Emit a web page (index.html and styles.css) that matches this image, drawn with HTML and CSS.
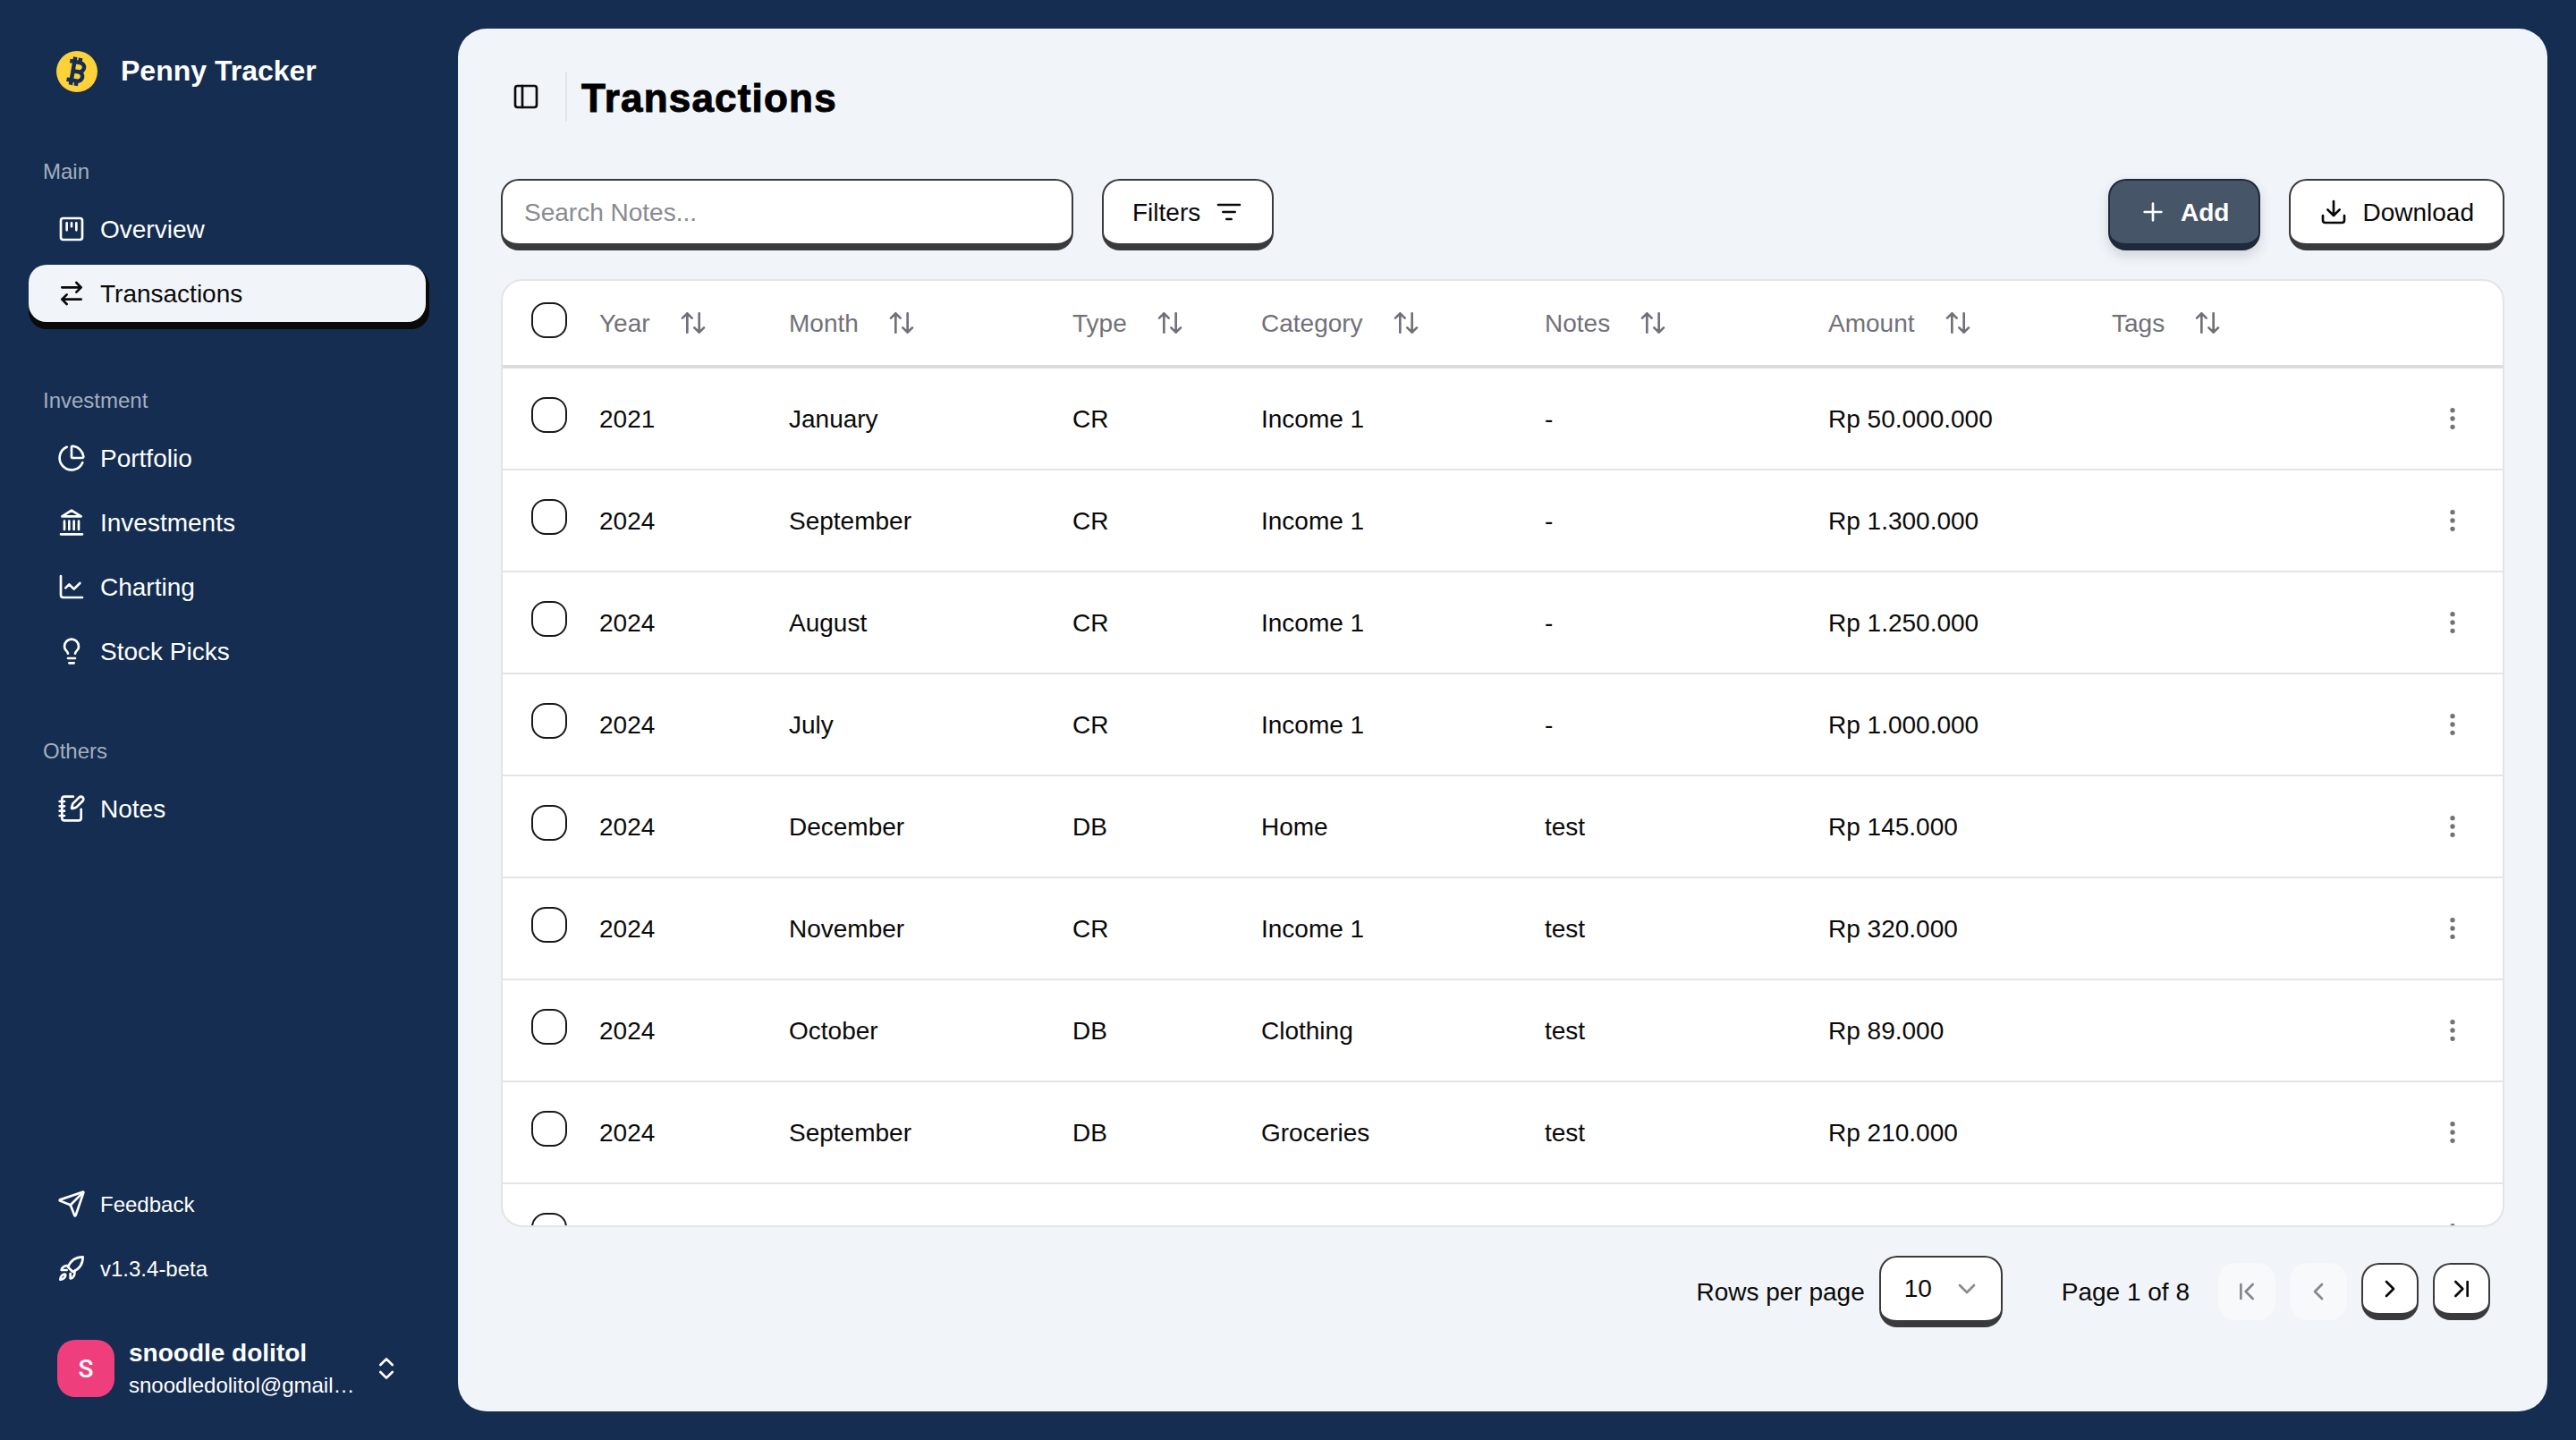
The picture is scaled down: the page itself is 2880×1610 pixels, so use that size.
FILE: index.html
```html
<!DOCTYPE html>
<html lang="en">
<head>
<meta charset="utf-8">
<title>Penny Tracker - Transactions</title>
<link rel="stylesheet" href="styles.css">
</head>
<body>
<svg class="defs" aria-hidden="true">
  <symbol id="i-kanban" viewBox="0 0 24 24"><rect x="3" y="3" width="18" height="18" rx="2"/><path d="M8 7v6M12 7v3M16 7v6"/></symbol>
  <symbol id="i-swap" viewBox="0 0 24 24"><path d="m16 3 4 4-4 4M20 7H4M8 21l-4-4 4-4M4 17h16"/></symbol>
  <symbol id="i-pie" viewBox="0 0 24 24"><path d="M21 12c.552 0 1.005-.449.95-.998a10 10 0 0 0-8.953-8.951c-.55-.055-.998.398-.998.95v8a1 1 0 0 0 1 1z"/><path d="M21.21 15.89A10 10 0 1 1 8 2.83"/></symbol>
  <symbol id="i-bank" viewBox="0 0 24 24"><path d="M3 22h18M6 18v-7M10 18v-7M14 18v-7M18 18v-7M12 2l8 5H4z"/></symbol>
  <symbol id="i-chart" viewBox="0 0 24 24"><path d="M3 3v16a2 2 0 0 0 2 2h16"/><path d="m7 13 3-3 4 4 5-5"/></symbol>
  <symbol id="i-bulb" viewBox="0 0 24 24"><path d="M15 14c.2-1 .7-1.700 1.500-2.500 1-.9 1.500-2.200 1.500-3.500A6 6 0 0 0 6 8c0 1 .2 2.200 1.500 3.500.7.7 1.300 1.500 1.500 2.500M9 18h6M10 22h4"/></symbol>
  <symbol id="i-notes" viewBox="0 0 24 24"><path d="M13.400 2H6a2 2 0 0 0-2 2v16a2 2 0 0 0 2 2h12a2 2 0 0 0 2-2v-7.400M2 6h4M2 10h4M2 14h4M2 18h4"/><path d="M21.378 5.626a1 1 0 1 0-3.004-3.004l-5.010 5.012a2 2 0 0 0-.506.854l-.837 2.870a.5.5 0 0 0 .62.62l2.870-.837a2 2 0 0 0 .854-.506z"/></symbol>
  <symbol id="i-send" viewBox="0 0 24 24"><path d="M14.536 21.686a.5.5 0 0 0 .937-.024l6.500-19a.496.496 0 0 0-.635-.635l-19 6.500a.5.5 0 0 0-.024.937l7.930 3.180a2 2 0 0 1 1.112 1.110z"/><path d="m21.854 2.147-10.940 10.939"/></symbol>
  <symbol id="i-rocket" viewBox="0 0 24 24"><path d="M21.500 2.500C15.500 2.500 11 6 9 11l4 4c5-2 8.500-6.500 8.500-12.500z"/><path d="M9.500 10C7 9.500 4 10.500 3.500 13.500H8M14.500 14.500c.5 2.500-.5 5.500-3.500 6V16.500"/><path d="M6.500 17C4.500 17 2.500 19 2.500 21.500 5 21.500 7 19.500 7 17.500z"/></symbol>
  <symbol id="i-updown" viewBox="0 0 24 24"><path d="m7 15 5 5 5-5M7 9l5-5 5 5"/></symbol>
  <symbol id="i-panel" viewBox="0 0 24 24"><rect x="3" y="3" width="18" height="18" rx="2"/><path d="M9 3v18"/></symbol>
  <symbol id="i-filter" viewBox="0 0 24 24"><path d="M3 6h18M7 12h10M10 18h4"/></symbol>
  <symbol id="i-plus" viewBox="0 0 24 24"><path d="M5 12h14M12 5v14"/></symbol>
  <symbol id="i-download" viewBox="0 0 24 24"><path d="M21 15v4a2 2 0 0 1-2 2H5a2 2 0 0 1-2-2v-4M7 10l5 5 5-5M12 15V3"/></symbol>
  <symbol id="i-sort" viewBox="0 0 24 24"><path d="m21 16-4 4-4-4M17 20V4M3 8l4-4 4 4M7 4v16"/></symbol>
  <symbol id="i-dots" viewBox="0 0 24 24"><circle cx="12" cy="5" r="1"/><circle cx="12" cy="12" r="1"/><circle cx="12" cy="19" r="1"/></symbol>
  <symbol id="i-down" viewBox="0 0 24 24"><path d="m6 9 6 6 6-6"/></symbol>
  <symbol id="i-first" viewBox="0 0 24 24"><path d="m17 18-6-6 6-6M7 6v12"/></symbol>
  <symbol id="i-prev" viewBox="0 0 24 24"><path d="m15 18-6-6 6-6"/></symbol>
  <symbol id="i-next" viewBox="0 0 24 24"><path d="m9 18 6-6-6-6"/></symbol>
  <symbol id="i-last" viewBox="0 0 24 24"><path d="m7 18 6-6-6-6M17 6v12"/></symbol>
</svg>

<aside class="sidebar">
  <div class="brand">
    <span class="brand-logo">
      <svg viewBox="0 0 24 24"><path d="M11.767 19.089c4.924.868 6.140-6.025 1.216-6.894m-1.216 6.894L5.860 18.047m5.908 1.042-.347 1.970m1.563-8.864c4.924.869 6.140-6.025 1.215-6.893m-1.215 6.893-3.940-.694m5.155-6.200L8.290 4.260m5.908 1.042.348-1.970M7.480 20.364l3.126-17.727"/></svg>
    </span>
    <span class="brand-name">Penny Tracker</span>
  </div>

  <nav class="nav-group">
    <div class="nav-label">Main</div>
    <a class="nav-item"><svg class="icon"><use href="#i-kanban"/></svg>Overview</a>
    <a class="nav-item active"><svg class="icon"><use href="#i-swap"/></svg>Transactions</a>
  </nav>
  <nav class="nav-group">
    <div class="nav-label">Investment</div>
    <a class="nav-item"><svg class="icon"><use href="#i-pie"/></svg>Portfolio</a>
    <a class="nav-item"><svg class="icon"><use href="#i-bank"/></svg>Investments</a>
    <a class="nav-item"><svg class="icon"><use href="#i-chart"/></svg>Charting</a>
    <a class="nav-item"><svg class="icon"><use href="#i-bulb"/></svg>Stock Picks</a>
  </nav>
  <nav class="nav-group">
    <div class="nav-label">Others</div>
    <a class="nav-item"><svg class="icon"><use href="#i-notes"/></svg>Notes</a>
  </nav>

  <div class="sidebar-foot">
    <a class="nav-item small"><svg class="icon"><use href="#i-send"/></svg>Feedback</a>
    <a class="nav-item small"><svg class="icon"><use href="#i-rocket"/></svg>v1.3.4-beta</a>
    <div class="user">
      <span class="avatar">S</span>
      <span class="user-info">
        <span class="user-name">snoodle dolitol</span>
        <span class="user-mail">snoodledolitol@gmail.com</span>
      </span>
      <svg class="icon"><use href="#i-updown"/></svg>
    </div>
  </div>
</aside>

<main class="main">
  <header class="page-head">
    <svg class="icon toggle"><use href="#i-panel"/></svg>
    <span class="head-sep"></span>
    <h1 class="page-title">Transactions</h1>
  </header>

  <div class="toolbar">
    <div class="search">Search Notes...</div>
    <button class="btn">Filters<svg class="icon"><use href="#i-filter"/></svg></button>
    <span class="spacer"></span>
    <button class="btn primary"><svg class="icon"><use href="#i-plus"/></svg>Add</button>
    <button class="btn"><svg class="icon"><use href="#i-download"/></svg>Download</button>
  </div>

  <div class="table-card">
    <table class="table">
      <colgroup>
        <col class="c-check"><col class="c-year"><col class="c-l"><col class="c-s"><col class="c-l"><col class="c-l"><col class="c-l"><col class="c-l"><col>
      </colgroup>
      <thead>
        <tr>
          <th><span class="check head"></span></th>
          <th><span class="th-in">Year<svg class="icon"><use href="#i-sort"/></svg></span></th>
          <th><span class="th-in">Month<svg class="icon"><use href="#i-sort"/></svg></span></th>
          <th><span class="th-in">Type<svg class="icon"><use href="#i-sort"/></svg></span></th>
          <th><span class="th-in">Category<svg class="icon"><use href="#i-sort"/></svg></span></th>
          <th><span class="th-in">Notes<svg class="icon"><use href="#i-sort"/></svg></span></th>
          <th><span class="th-in">Amount<svg class="icon"><use href="#i-sort"/></svg></span></th>
          <th><span class="th-in">Tags<svg class="icon"><use href="#i-sort"/></svg></span></th>
          <th></th>
        </tr>
      </thead>
      <tbody>
        <tr><td><span class="check"></span></td><td>2021</td><td>January</td><td>CR</td><td>Income 1</td><td>-</td><td>Rp 50.000.000</td><td></td><td class="act"><svg class="icon dots"><use href="#i-dots"/></svg></td></tr>
        <tr><td><span class="check"></span></td><td>2024</td><td>September</td><td>CR</td><td>Income 1</td><td>-</td><td>Rp 1.300.000</td><td></td><td class="act"><svg class="icon dots"><use href="#i-dots"/></svg></td></tr>
        <tr><td><span class="check"></span></td><td>2024</td><td>August</td><td>CR</td><td>Income 1</td><td>-</td><td>Rp 1.250.000</td><td></td><td class="act"><svg class="icon dots"><use href="#i-dots"/></svg></td></tr>
        <tr><td><span class="check"></span></td><td>2024</td><td>July</td><td>CR</td><td>Income 1</td><td>-</td><td>Rp 1.000.000</td><td></td><td class="act"><svg class="icon dots"><use href="#i-dots"/></svg></td></tr>
        <tr><td><span class="check"></span></td><td>2024</td><td>December</td><td>DB</td><td>Home</td><td>test</td><td>Rp 145.000</td><td></td><td class="act"><svg class="icon dots"><use href="#i-dots"/></svg></td></tr>
        <tr><td><span class="check"></span></td><td>2024</td><td>November</td><td>CR</td><td>Income 1</td><td>test</td><td>Rp 320.000</td><td></td><td class="act"><svg class="icon dots"><use href="#i-dots"/></svg></td></tr>
        <tr><td><span class="check"></span></td><td>2024</td><td>October</td><td>DB</td><td>Clothing</td><td>test</td><td>Rp 89.000</td><td></td><td class="act"><svg class="icon dots"><use href="#i-dots"/></svg></td></tr>
        <tr><td><span class="check"></span></td><td>2024</td><td>September</td><td>DB</td><td>Groceries</td><td>test</td><td>Rp 210.000</td><td></td><td class="act"><svg class="icon dots"><use href="#i-dots"/></svg></td></tr>
        <tr><td><span class="check"></span></td><td></td><td></td><td></td><td></td><td></td><td></td><td></td><td class="act"><svg class="icon dots"><use href="#i-dots"/></svg></td></tr>
      </tbody>
    </table>
  </div>

  <div class="pager">
    <span class="pager-text">Rows per page</span>
    <div class="select"><span>10</span><svg class="icon"><use href="#i-down"/></svg></div>
    <span class="pager-text page-no">Page 1 of 8</span>
    <button class="page-btn off"><svg class="icon"><use href="#i-first"/></svg></button>
    <button class="page-btn off"><svg class="icon"><use href="#i-prev"/></svg></button>
    <button class="page-btn"><svg class="icon"><use href="#i-next"/></svg></button>
    <button class="page-btn"><svg class="icon"><use href="#i-last"/></svg></button>
  </div>
</main>
</body>
</html>
```
FILE: styles.css
```css
* { box-sizing: border-box; }
html, body { margin: 0; height: 100%; }
body {
  width: 2880px;
  height: 1610px;
  display: flex;
  overflow: hidden;
  background: #142d50;
  font-family: "Liberation Sans", Arial, sans-serif;
  font-size: 28px;
  color: #0a0a0a;
}
.defs { position: absolute; width: 0; height: 0; }
.icon {
  width: 32px;
  height: 32px;
  flex: none;
  fill: none;
  stroke: currentColor;
  stroke-width: 2;
  stroke-linecap: round;
  stroke-linejoin: round;
}

/* Sidebar */
.sidebar {
  width: 512px;
  flex: none;
  display: flex;
  flex-direction: column;
  padding: 57px 32px 48px;
  color: #fff;
}
.brand { display: flex; align-items: center; height: 46px; margin-left: 31px; }
.brand-logo {
  width: 46px;
  height: 46px;
  border-radius: 50%;
  background: #fdd13a;
  display: flex;
  align-items: center;
  justify-content: center;
  margin-right: 26px;
}
.brand-logo svg { width: 36px; height: 36px; fill: none; stroke: #142d50; stroke-width: 3; stroke-linecap: square; stroke-linejoin: round; }
.brand-name { font-size: 32px; font-weight: 700; line-height: 46px; margin-top: -2px; }
.nav-group { display: flex; flex-direction: column; gap: 8px; margin-top: 64px; }
.brand + .nav-group { margin-top: 73px; }
.nav-label { font-size: 24px; line-height: 32px; color: #a3afc0; margin: 0 0 8px 16px; }
.nav-item {
  display: flex;
  align-items: center;
  gap: 16px;
  height: 64px;
  padding: 2px 32px 0;
  border-radius: 20px;
  color: #fff;
}
.nav-item .icon { margin-top: -2px; }
.nav-item.active {
  background: #f1f5f9;
  color: #0a0a0a;
  margin: 0 4px 8px 0;
  box-shadow: 0 8px 0 #0a0a0a, 4px 4px 0 #0a0a0a, 4px 8px 0 #0a0a0a;
}
.nav-item.small { font-size: 24px; }
.sidebar-foot { margin-top: auto; display: flex; flex-direction: column; gap: 8px; }
.user { display: flex; align-items: center; height: 64px; margin: 40px 0 0; padding-left: 32px; }
.avatar {
  width: 64px;
  height: 64px;
  flex: none;
  border-radius: 20px;
  background: #ee3f7c;
  display: flex;
  align-items: center;
  justify-content: center;
  font-family: Roboto, sans-serif;
  font-weight: 500;
  font-size: 28px;
}
.user-info { width: 256px; margin: 0 16px; display: flex; flex-direction: column; }
.user-name { font-size: 28px; font-weight: 700; line-height: 36px; margin-top: 2px; }
.user-mail { font-size: 24px; line-height: 36px; white-space: nowrap; overflow: hidden; text-overflow: ellipsis; }

/* Main panel */
.main {
  flex: 1;
  min-width: 0;
  margin: 32px 32px 32px 0;
  padding: 48px 48px 94px;
  background: #f1f5f9;
  border-radius: 32px;
  display: flex;
  flex-direction: column;
}
.page-head { display: flex; align-items: center; height: 56px; flex: none; }
.toggle { margin: 0 28px 0 12px; }
.head-sep { width: 2px; height: 56px; background: #e2e5ea; margin-right: 16px; }
.page-title { margin: 4px 0 0; font-size: 44px; font-weight: 700; letter-spacing: 1.200px; color: #000; line-height: 56px; -webkit-text-stroke: 1px #000; }

.toolbar { display: flex; align-items: stretch; gap: 32px; height: 80px; margin-top: 64px; flex: none; }
.spacer { flex: 1; margin-left: -32px; }
.search {
  width: 640px;
  display: flex;
  align-items: center;
  padding: 2px 24px 0;
  background: #fff;
  color: #8a8a90;
  border: 2px solid #3a3a3c;
  border-bottom-width: 8px;
  border-radius: 20px;
}
.btn {
  display: flex;
  align-items: center;
  gap: 16px;
  padding: 2px 32px 0;
  font: inherit;
  color: #0a0a0a;
  background: #fff;
  border: 2px solid #3a3a3c;
  border-bottom-width: 8px;
  border-radius: 20px;
}
.btn .icon { margin-top: -2px; }
.btn.primary {
  gap: 15px;
  padding-right: 33px;
  background: #475569;
  border-color: #1e293b;
  color: #fff;
  font-weight: 700;
  box-shadow: 0 6px 14px rgba(30, 41, 59, .16);
}

/* Table */
.table-card {
  flex: 1;
  min-height: 0;
  margin-top: 32px;
  overflow: hidden;
  background: #fff;
  border: 2px solid #e4e4e7;
  border-radius: 24px;
}
.table { width: 100%; table-layout: fixed; border-collapse: separate; border-spacing: 0; }
.c-check { width: 92px; }
.c-year { width: 212px; }
.c-s { width: 211px; }
.c-l { width: 317px; }
.table th, .table td { padding: 0 16px; text-align: left; vertical-align: middle; font-weight: 400; }
.table th { height: 98px; padding-top: 2px; color: #71717a; border-bottom: 4px solid #dcdcde; }
.table td { height: 114px; border-bottom: 2px solid #e4e4e7; padding-top: 2px; }
.table th:first-child, .table td:first-child { padding: 0 0 0 32px; }
.th-in { display: flex; align-items: center; gap: 32px; }
.th-in .icon { margin-top: -3px; }
.check { display: block; width: 40px; height: 40px; border: 2px solid #18181b; border-radius: 16px; margin-bottom: 8px; }
.check.head { margin-bottom: 6px; }
.table td.act { padding: 0 40px 0 0; text-align: right; }
.dots { display: block; margin-left: auto; color: #71717a; }

/* Pager */
.pager { display: flex; align-items: center; justify-content: flex-end; flex: none; height: 80px; margin-top: 32px; padding-right: 16px; gap: 16px; }
.pager-text { margin-top: 2px; }
.select {
  width: 138px;
  height: 80px;
  display: flex;
  align-items: center;
  justify-content: space-between;
  padding: 0 22px 0 26px;
  background: #fff;
  border: 2px solid #3a3a3c;
  border-bottom-width: 8px;
  border-radius: 20px;
}
.select .icon { color: #8a8a90; }
.page-no { margin: 2px 16px 0 50px; }
.page-btn {
  width: 64px;
  height: 64px;
  display: flex;
  align-items: center;
  justify-content: center;
  padding: 0;
  color: #0a0a0a;
  background: #fff;
  border: 2px solid #3a3a3c;
  border-bottom-width: 8px;
  border-radius: 20px;
}
.page-btn.off { background: #f8f9fb; border: 0; color: #85878c; }
```
